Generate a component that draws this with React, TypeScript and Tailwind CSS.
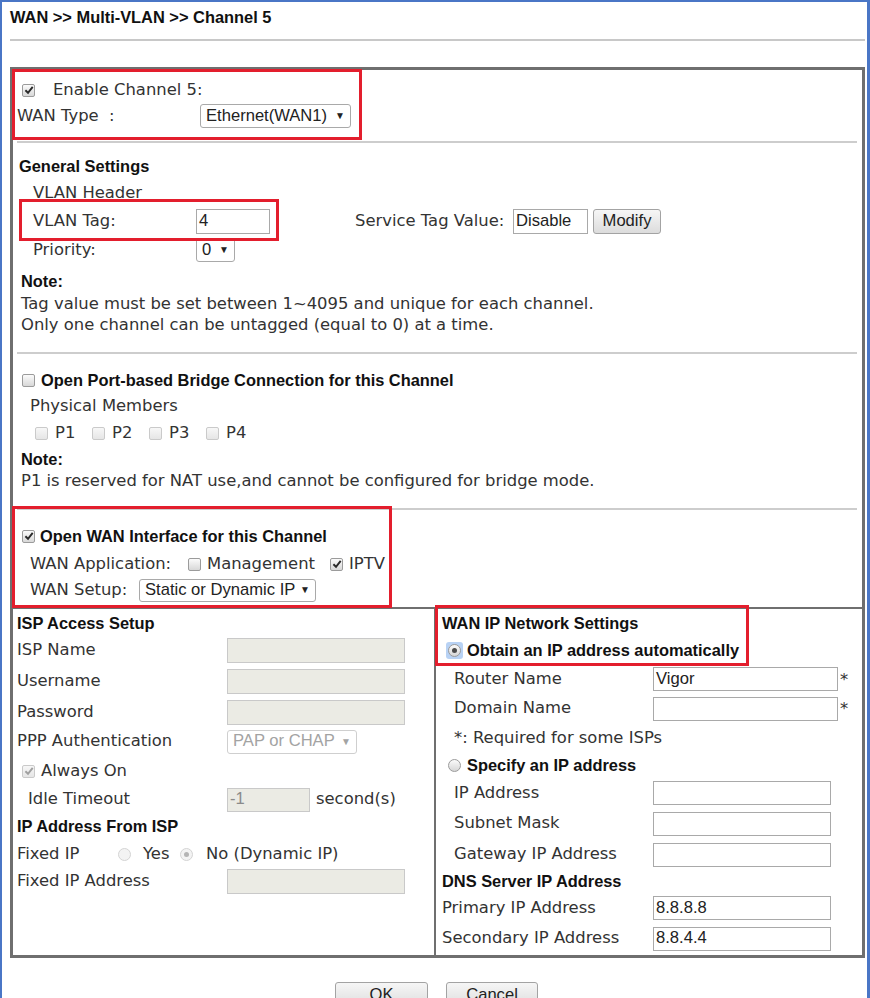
import React from "react";

const V = "[font-family:'DejaVu_Sans',Verdana,sans-serif] text-[16.4px] text-[#333] leading-none";
const B = "[font-family:'Liberation_Sans',Arial,sans-serif] text-[16.4px] font-bold text-[#111] leading-none";
const A = "[font-family:'Liberation_Sans',Arial,sans-serif] text-[16.6px] leading-none";

function Check({ checked = false, disabled = false }: { checked?: boolean; disabled?: boolean }) {
  return (
    <span
      className={`inline-flex h-[13px] w-[13px] shrink-0 items-center justify-center rounded-[2px] border ${
        disabled
          ? "border-[#cacaca] bg-linear-to-b from-[#f7f7f7] to-[#e6e6e6]"
          : "border-[#9b9b9b] bg-linear-to-b from-[#fbfbfb] to-[#d8d8d8]"
      }`}
    >
      {checked && (
        <svg width="10" height="10" viewBox="0 0 10 10">
          <path d="M1.4 5.3 L4 7.8 L8.7 1.8" fill="none" stroke={disabled ? "#a0a0a0" : "#2a2a2a"} strokeWidth="1.9" />
        </svg>
      )}
    </span>
  );
}

function Radio({ checked = false, disabled = false, focus = false }: { checked?: boolean; disabled?: boolean; focus?: boolean }) {
  const circle = (
    <span
      className={`inline-flex h-[13px] w-[13px] shrink-0 items-center justify-center rounded-full border ${
        disabled ? "border-[#d4d4d4] bg-[#f3f3f3]" : "border-[#9b9b9b] bg-linear-to-b from-[#fbfbfb] to-[#d6d6d6]"
      }`}
    >
      {checked && <span className={`h-[5px] w-[5px] rounded-full ${disabled ? "bg-[#b4b4b4]" : "bg-[#4a4a4a]"}`} />}
    </span>
  );
  if (focus) return <span className="inline-flex rounded-[3px] bg-[#b8d2f4] p-[2px]">{circle}</span>;
  return circle;
}

function Sel({ children, cls, disabled = false }: { children: React.ReactNode; cls: string; disabled?: boolean }) {
  return (
    <span
      className={`${A} inline-flex items-center justify-between rounded-[3px] border bg-white px-[5px] ${
        disabled ? "border-[#cfcfcf] text-[#a3a3a3]" : "border-[#a9a9a9] text-[#222]"
      } ${cls}`}
    >
      <span>{children}</span>
      <span className="text-[10px]">▼</span>
    </span>
  );
}

function Inp({ cls, value = "", disabled = false }: { cls: string; value?: string; disabled?: boolean }) {
  return (
    <span
      className={`${A} inline-flex items-center border px-[2px] ${
        disabled ? "border-[#c9c9c9] bg-[#ebebe4] text-[#8a8a8a]" : "border-[#a9a9a9] bg-white text-[#222]"
      } ${cls}`}
    >
      {value}
    </span>
  );
}

function Btn({ children, cls }: { children: React.ReactNode; cls: string }) {
  return (
    <span
      className={`${A} inline-flex items-center justify-center rounded-[3px] border border-[#a3a3a3] bg-linear-to-b from-[#f6f6f6] to-[#dcdcdc] text-[#222] ${cls}`}
    >
      {children}
    </span>
  );
}

function Sep() {
  return <div className="ml-[4px] mr-[5px] h-[2px] bg-[#cdcdcd]" />;
}

export default function App() {
  return (
    <div className="relative h-[998px] w-[870px] overflow-hidden border-l-[2px] border-r-[3px] border-t-[2px] border-[#4a76c6] bg-white">
      {/* header */}
      <div className={`${B} flex h-[30px] items-center pl-[8px] text-[#1a1a1a]`}>WAN &gt;&gt; Multi-VLAN &gt;&gt; Channel 5</div>
      <div className="ml-[8px] mt-[7px] h-[2px] w-[855px] bg-[#c8c8c8]" />

      {/* main box */}
      <div className="ml-[8px] mt-[26px] flex h-[891px] w-[855px] flex-col border-[3px] border-[#6f6f6f]">
        {/* section 1 */}
        <div className="pb-[12px] pt-[7px]">
          <div className="flex h-[26px] items-center pl-[9px]">
            <Check checked />
            <span className={`${V} ml-[18px]`}>Enable Channel 5:</span>
          </div>
          <div className="flex h-[26px] items-center">
            <span className={`${V} w-[187px] whitespace-pre pl-[4px]`}>WAN Type  :</span>
            <Sel cls="h-[24px] w-[151px]">Ethernet(WAN1)</Sel>
          </div>
        </div>
        <Sep />

        {/* section 2 */}
        <div className="pb-[16px] pt-[10px]">
          <div className={`${B} flex h-[26px] items-center pl-[6px]`}>General Settings</div>
          <div className={`${V} flex h-[28px] items-center pl-[20px]`}>VLAN Header</div>
          <div className="flex h-[28px] items-center">
            <span className={`${V} w-[183px] pl-[20px]`}>VLAN Tag:</span>
            <Inp cls="h-[25px] w-[74px]" value="4" />
            <span className={`${V} ml-[85px] w-[158px]`}>Service Tag Value:</span>
            <Inp cls="h-[25px] w-[75px]" value="Disable" />
            <Btn cls="ml-[5px] h-[25px] w-[68px]">Modify</Btn>
          </div>
          <div className="flex h-[30px] items-center">
            <span className={`${V} w-[183px] pl-[20px]`}>Priority:</span>
            <Sel cls="h-[24px] w-[39px]">0</Sel>
          </div>
          <div className={`${B} mt-[4px] flex h-[24px] items-center pl-[8px]`}>Note:</div>
          <div className={`${V} flex h-[22px] items-center pl-[8px]`}>
            Tag value must be set between 1~4095 and unique for each channel.
          </div>
          <div className={`${V} flex h-[21px] items-center pl-[8px]`}>Only one channel can be untagged (equal to 0) at a time.</div>
        </div>
        <Sep />

        {/* section 3 */}
        <div className="pb-[17px] pt-[13px]">
          <div className="flex h-[26px] items-center pl-[9px]">
            <Check />
            <span className={`${B} ml-[6px]`}>Open Port-based Bridge Connection for this Channel</span>
          </div>
          <div className={`${V} flex h-[26px] items-center pl-[17px]`}>Physical Members</div>
          <div className="flex h-[28px] items-center pl-[22px]">
            {["P1", "P2", "P3", "P4"].map((p) => (
              <span key={p} className="flex w-[57px] items-center">
                <Check disabled />
                <span className={`${V} ml-[7px]`}>{p}</span>
              </span>
            ))}
          </div>
          <div className={`${B} flex h-[24px] items-center pl-[8px]`}>Note:</div>
          <div className={`${V} flex h-[20px] items-center pl-[8px]`}>
            P1 is reserved for NAT use,and cannot be configured for bridge mode.
          </div>
        </div>
        <Sep />

        {/* section 4 */}
        <div className="pb-[6px] pt-[13px]">
          <div className="flex h-[26px] items-center pl-[9px]">
            <Check checked />
            <span className={`${B} ml-[5px]`}>Open WAN Interface for this Channel</span>
          </div>
          <div className="flex h-[30px] items-center">
            <span className={`${V} w-[175px] pl-[17px]`}>WAN Application:</span>
            <Check />
            <span className={`${V} ml-[6px] w-[123px]`}>Management</span>
            <Check checked />
            <span className={`${V} ml-[6px]`}>IPTV</span>
          </div>
          <div className="flex h-[22px] items-center">
            <span className={`${V} w-[126px] pl-[17px]`}>WAN Setup:</span>
            <Sel cls="h-[23px] w-[177px]">Static or Dynamic IP</Sel>
          </div>
        </div>

        {/* section 5 */}
        <div className="flex flex-1 border-t-[2px] border-[#6f6f6f]">
          {/* left column */}
          <div className="w-[423px] border-r-[2px] border-[#6f6f6f] pt-[2px]">
            <div className={`${B} flex h-[24px] items-center pl-[4px]`}>ISP Access Setup</div>
            <div className="flex h-[31px] items-center">
              <span className={`${V} w-[214px] pl-[4px]`}>ISP Name</span>
              <Inp cls="h-[25px] w-[178px]" disabled />
            </div>
            <div className="flex h-[31px] items-center">
              <span className={`${V} w-[214px] pl-[4px]`}>Username</span>
              <Inp cls="h-[25px] w-[178px]" disabled />
            </div>
            <div className="flex h-[31px] items-center">
              <span className={`${V} w-[214px] pl-[4px]`}>Password</span>
              <Inp cls="h-[25px] w-[178px]" disabled />
            </div>
            <div className="flex h-[27px] items-center">
              <span className={`${V} w-[214px] pl-[4px]`}>PPP Authentication</span>
              <Sel cls="h-[24px] w-[130px]" disabled>
                PAP or CHAP
              </Sel>
            </div>
            <div className="flex h-[32px] items-center pl-[9px]">
              <Check checked disabled />
              <span className={`${V} ml-[6px]`}>Always On</span>
            </div>
            <div className="flex h-[25px] items-center">
              <span className={`${V} w-[214px] pl-[15px]`}>Idle Timeout</span>
              <Inp cls="h-[24px] w-[83px]" value="-1" disabled />
              <span className={`${V} ml-[6px]`}>second(s)</span>
            </div>
            <div className={`${B} flex h-[28px] items-center pl-[4px]`}>IP Address From ISP</div>
            <div className="flex h-[29px] items-center">
              <span className={`${V} w-[105px] pl-[4px]`}>Fixed IP</span>
              <Radio disabled />
              <span className={`${V} ml-[12px] w-[37px]`}>Yes</span>
              <Radio checked disabled />
              <span className={`${V} ml-[13px]`}>No (Dynamic IP)</span>
            </div>
            <div className="flex h-[25px] items-center">
              <span className={`${V} w-[214px] pl-[4px]`}>Fixed IP Address</span>
              <Inp cls="h-[25px] w-[178px]" disabled />
            </div>
          </div>

          {/* right column */}
          <div className="flex-1 pt-[2px]">
            <div className={`${B} flex h-[24px] items-center pl-[6px]`}>WAN IP Network Settings</div>
            <div className="flex h-[30px] items-center pl-[10px]">
              <Radio checked focus />
              <span className={`${B} ml-[4px]`}>Obtain an IP address automatically</span>
            </div>
            <div className="flex h-[28px] items-center">
              <span className={`${V} w-[217px] pl-[18px]`}>Router Name</span>
              <Inp cls="h-[24px] w-[185px]" value="Vigor" />
              <span className={`${V} ml-[2px] self-start pt-[7px] text-[11px]`}>*</span>
            </div>
            <div className="flex h-[31px] items-center">
              <span className={`${V} w-[217px] pl-[18px]`}>Domain Name</span>
              <Inp cls="h-[24px] w-[185px]" />
              <span className={`${V} ml-[2px] self-start pt-[8px] text-[11px]`}>*</span>
            </div>
            <div className={`${V} flex h-[28px] items-center pl-[18px]`}>*: Required for some ISPs</div>
            <div className="flex h-[26px] items-center pl-[12px]">
              <Radio />
              <span className={`${B} ml-[6px]`}>Specify an IP address</span>
            </div>
            <div className="flex h-[30px] items-center">
              <span className={`${V} w-[217px] pl-[18px]`}>IP Address</span>
              <Inp cls="h-[24px] w-[178px]" />
            </div>
            <div className="flex h-[31px] items-center">
              <span className={`${V} w-[217px] pl-[18px]`}>Subnet Mask</span>
              <Inp cls="h-[24px] w-[178px]" />
            </div>
            <div className="flex h-[31px] items-center">
              <span className={`${V} w-[217px] pl-[18px]`}>Gateway IP Address</span>
              <Inp cls="h-[24px] w-[178px]" />
            </div>
            <div className={`${B} flex h-[23px] items-center pl-[6px]`}>DNS Server IP Address</div>
            <div className="flex h-[30px] items-center">
              <span className={`${V} w-[217px] pl-[6px]`}>Primary IP Address</span>
              <Inp cls="h-[24px] w-[178px]" value="8.8.8.8" />
            </div>
            <div className="flex h-[31px] items-center">
              <span className={`${V} w-[217px] pl-[6px]`}>Secondary IP Address</span>
              <Inp cls="h-[24px] w-[178px]" value="8.8.4.4" />
            </div>
          </div>
        </div>
      </div>

      {/* buttons */}
      <div className="mt-[24px] flex justify-center gap-[18px] pl-[4px]">
        <Btn cls="h-[27px] w-[93px]">OK</Btn>
        <Btn cls="h-[27px] w-[92px]">Cancel</Btn>
      </div>

      {/* red annotation boxes */}
      <div className="pointer-events-none absolute left-[10px] top-[67px] h-[71px] w-[350px] border-[3px] border-[#e31e2d]" />
      <div className="pointer-events-none absolute left-[17px] top-[197px] h-[42px] w-[260px] border-[3px] border-[#e31e2d]" />
      <div className="pointer-events-none absolute left-[10px] top-[504px] h-[102px] w-[380px] border-[3px] border-[#e31e2d]" />
      <div className="pointer-events-none absolute left-[433px] top-[603px] h-[61px] w-[314px] border-[3px] border-[#e31e2d]" />
    </div>
  );
}
